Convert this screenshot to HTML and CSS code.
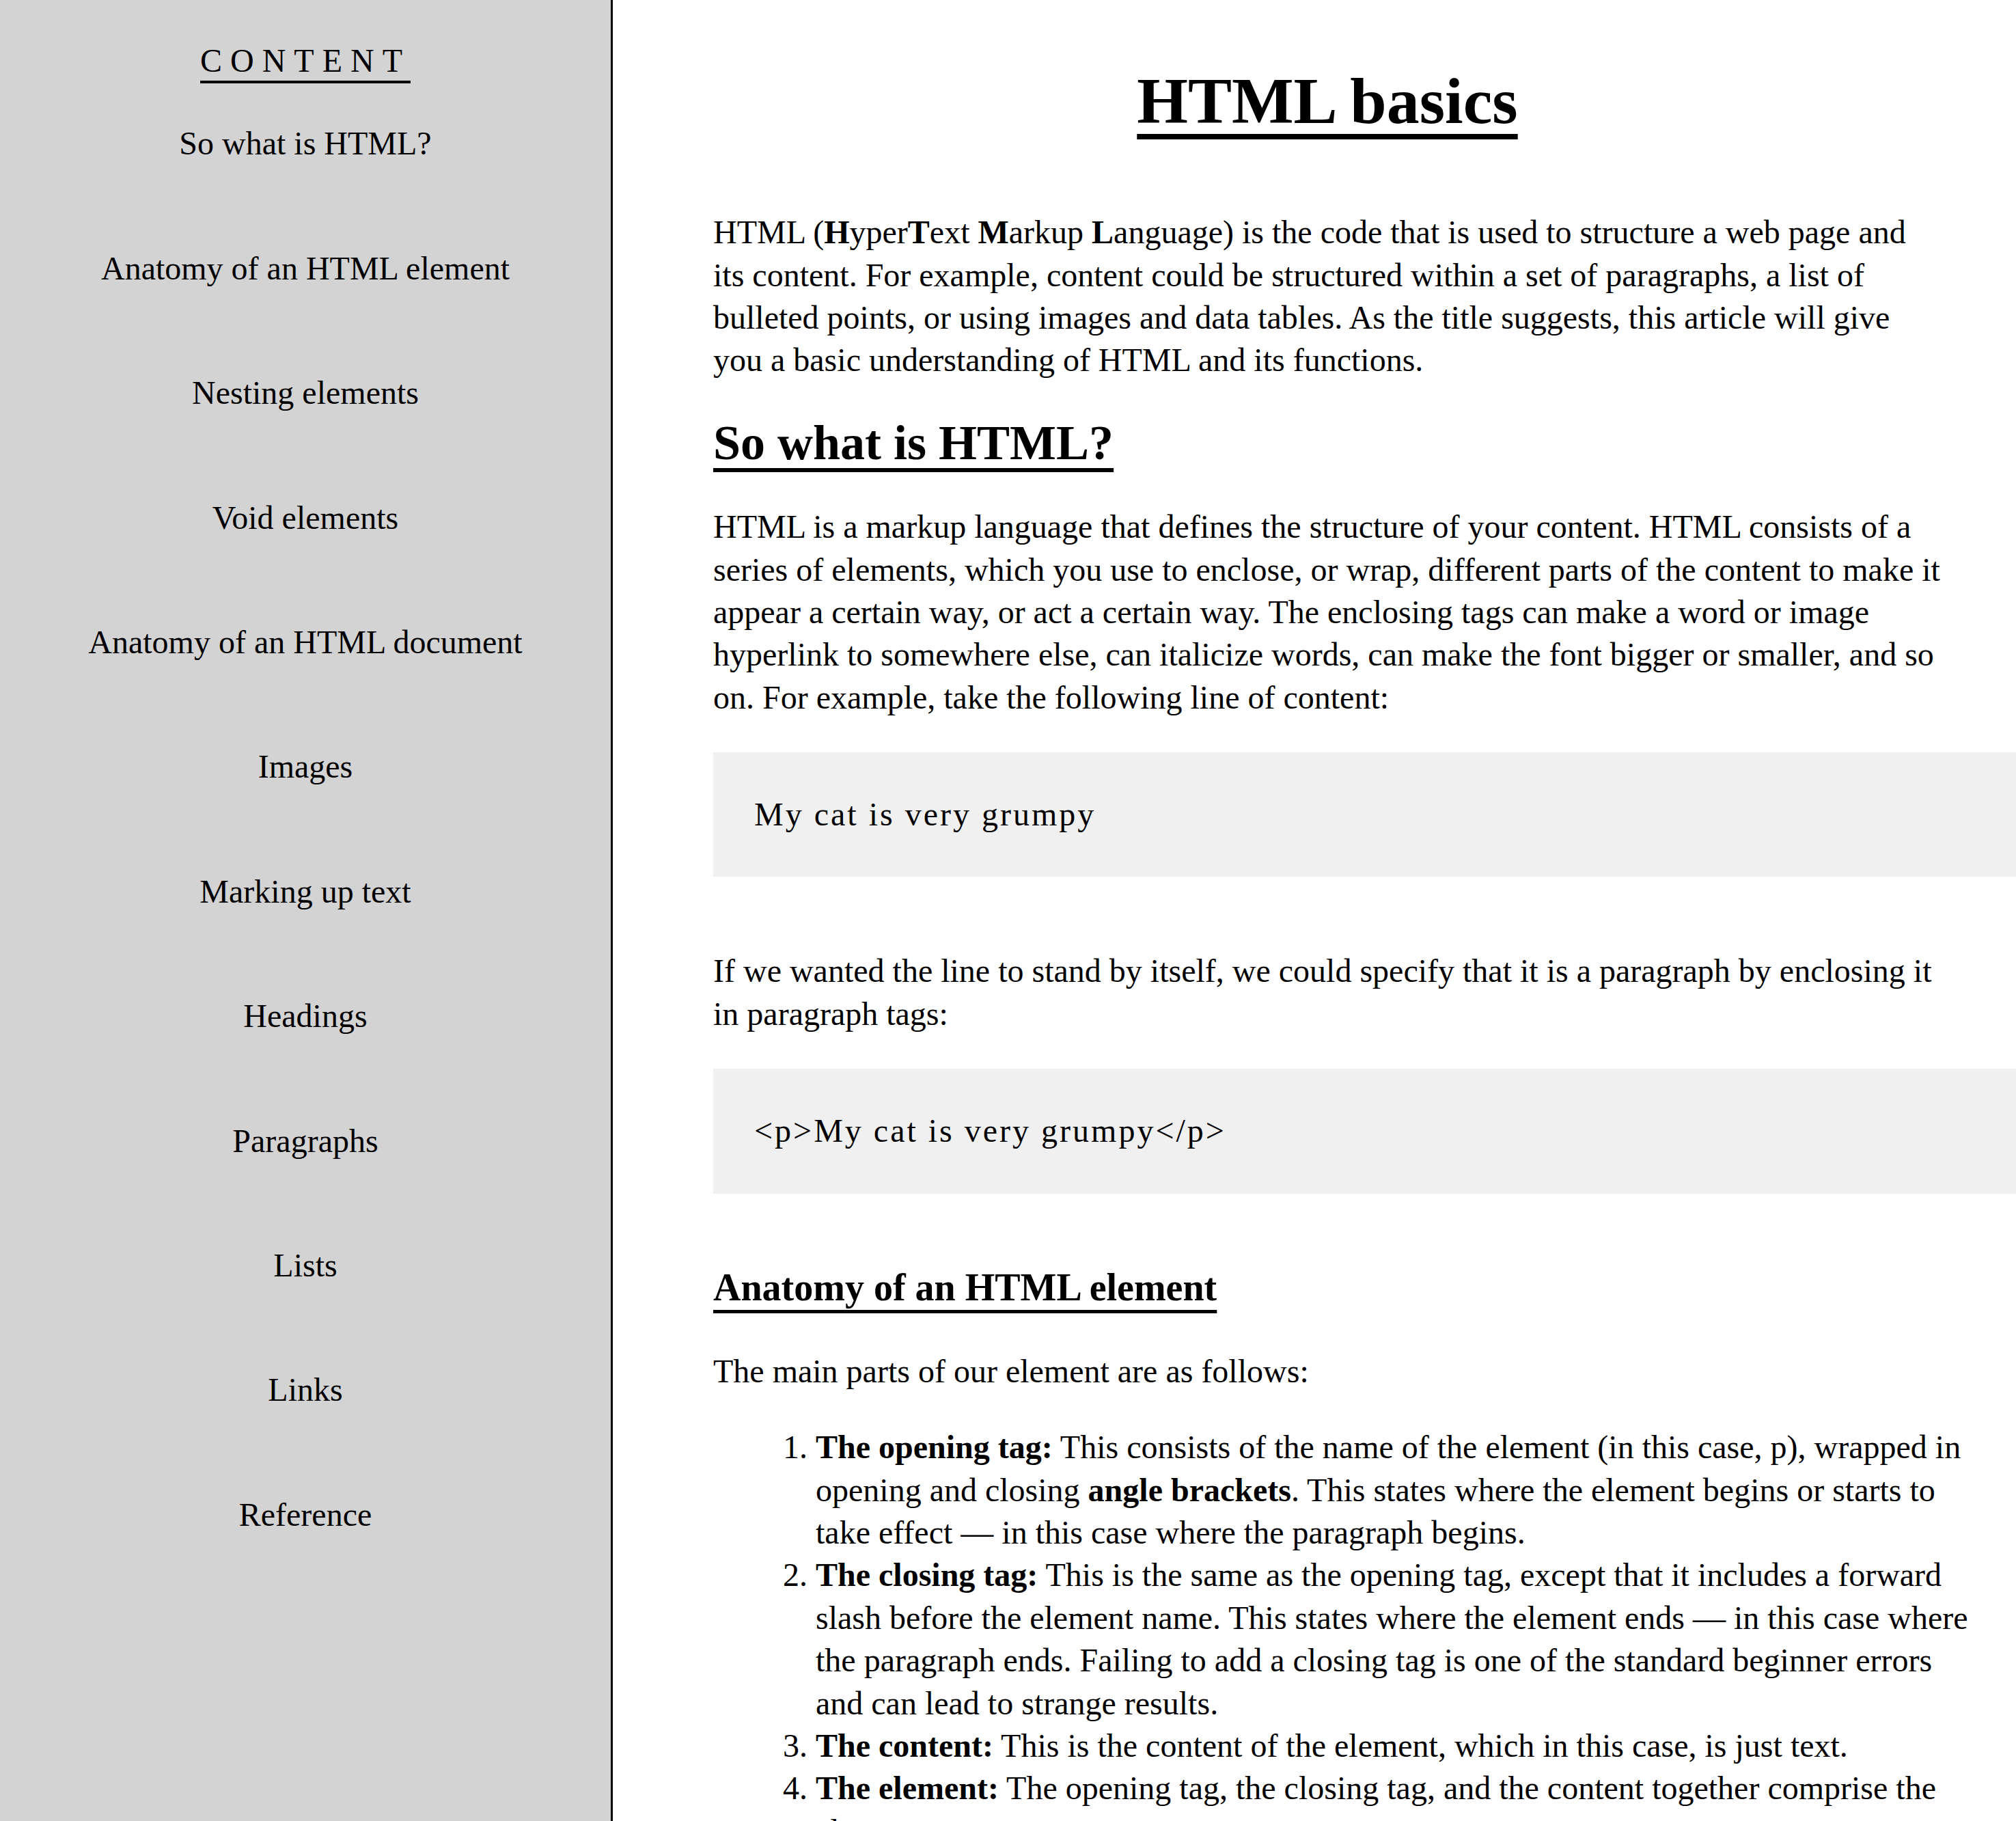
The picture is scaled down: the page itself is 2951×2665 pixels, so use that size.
FILE: index.html
```html
<!DOCTYPE html>
<html lang="en">
<head>
<meta charset="utf-8">
<title>HTML basics</title>
<link rel="stylesheet" href="styles.css">
</head>
<body>
<div class="page">
  <nav class="sidebar">
    <h2 class="toc-title">CONTENT</h2>
    <ul class="toc-list">
      <li><a class="toc-link" href="#what">So what is HTML?</a></li>
      <li><a class="toc-link" href="#anatomy">Anatomy of an HTML element</a></li>
      <li><a class="toc-link" href="#nesting">Nesting elements</a></li>
      <li><a class="toc-link" href="#void">Void elements</a></li>
      <li><a class="toc-link" href="#document">Anatomy of an HTML document</a></li>
      <li><a class="toc-link" href="#images">Images</a></li>
      <li><a class="toc-link" href="#markup">Marking up text</a></li>
      <li><a class="toc-link" href="#headings">Headings</a></li>
      <li><a class="toc-link" href="#paragraphs">Paragraphs</a></li>
      <li><a class="toc-link" href="#lists">Lists</a></li>
      <li><a class="toc-link" href="#links">Links</a></li>
      <li><a class="toc-link" href="#reference">Reference</a></li>
    </ul>
  </nav>
  <main class="content">
    <h1 class="title">HTML basics</h1>
    <p class="text">HTML (<b>H</b>yper<b>T</b>ext <b>M</b>arkup <b>L</b>anguage) is the code that is used to structure a web page and its content. For example, content could be structured within a set of paragraphs, a list of bulleted points, or using images and data tables. As the title suggests, this article will give you a basic understanding of HTML and its functions.</p>
    <h2 class="section-heading" id="what">So what is HTML?</h2>
    <p class="text">HTML is a markup language that defines the structure of your content. HTML consists of a series of elements, which you use to enclose, or wrap, different parts of the content to make it appear a certain way, or act a certain way. The enclosing tags can make a word or image hyperlink to somewhere else, can italicize words, can make the font bigger or smaller, and so on. For example, take the following line of content:</p>
    <pre class="code">My cat is very grumpy</pre>
    <p class="text">If we wanted the line to stand by itself, we could specify that it is a paragraph by enclosing it in paragraph tags:</p>
    <pre class="code">&lt;p&gt;My cat is very grumpy&lt;/p&gt;</pre>
    <h3 class="sub-heading" id="anatomy">Anatomy of an HTML element</h3>
    <p class="text">The main parts of our element are as follows:</p>
    <ol class="steps">
      <li><b>The opening tag:</b> This consists of the name of the element (in this case, p), wrapped in opening and closing <b>angle brackets</b>. This states where the element begins or starts to take effect — in this case where the paragraph begins.</li>
      <li><b>The closing tag:</b> This is the same as the opening tag, except that it includes a forward slash before the element name. This states where the element ends — in this case where the paragraph ends. Failing to add a closing tag is one of the standard beginner errors and can lead to strange results.</li>
      <li><b>The content:</b> This is the content of the element, which in this case, is just text.</li>
      <li><b>The element:</b> The opening tag, the closing tag, and the content together comprise the element.</li>
    </ol>
  </main>
</div>
</body>
</html>
```
FILE: styles.css
```css
html {
  scrollbar-width: none;
}

body {
  margin: 0;
  font-family: "Liberation Serif", "Times New Roman", Times, serif;
  font-size: 48px;
  line-height: 1.3;
  color: #000;
  background: #fff;
}

.page {
  display: flex;
  min-height: 100vh;
}

/* ---------- sidebar ---------- */
.sidebar {
  flex: none;
  width: 894px;
  background: #d3d3d3;
  border-right: 3px solid #000;
  text-align: center;
  padding-top: 58px;
}

.toc-title {
  margin: 0;
  font-size: 48px;
  font-weight: normal;
  line-height: 1.3;
  letter-spacing: 12px;
  text-decoration: underline;
  text-decoration-thickness: 4px;
  text-underline-offset: 13px;
}

.toc-list {
  list-style: none;
  margin: 59px 0 0;
  padding: 0;
  display: flex;
  flex-direction: column;
  gap: 120px;
}

.toc-link {
  color: #000;
  text-decoration: none;
}

/* ---------- main ---------- */
.content {
  flex: 1;
  min-width: 0;
  padding: 0 109px 40px 147px;
  overflow: hidden;
}

.title {
  margin: 90px 0 0;
  font-size: 96px;
  line-height: 1.2;
  text-align: center;
  text-decoration: underline;
  text-decoration-thickness: 8px;
  text-underline-offset: 16px;
}

.section-heading {
  margin: 0;
  font-size: 72px;
  line-height: 1.2;
  text-decoration: underline;
  text-decoration-thickness: 6px;
  text-underline-offset: 13px;
}

.sub-heading {
  margin: 0;
  font-size: 56px;
  line-height: 1.2;
  text-decoration: underline;
  text-decoration-thickness: 5px;
  text-underline-offset: 14px;
}

.text {
  margin: 0;
}

.code {
  box-sizing: content-box;
  width: 100%;
  margin: 0;
  padding: 60px;
  background: #f0f0f0;
  font-family: "Liberation Serif", "Times New Roman", Times, serif;
  font-size: 48px;
  line-height: 1.3;
  letter-spacing: 3px;
  white-space: pre;
}

.steps {
  margin: 0 -60px 0 0;
  padding-left: 150px;
}

/* vertical rhythm */
.title + .text { margin-top: 104px; }
.text + .section-heading { margin-top: 46px; }
.section-heading + .text { margin-top: 49px; }
.text + .code { margin-top: 49px; }
.code + .text { margin-top: 107px; }
.code + .sub-heading { margin-top: 104px; }
.sub-heading + .text { margin-top: 58px; }
.text + .steps { margin-top: 49px; }
```
